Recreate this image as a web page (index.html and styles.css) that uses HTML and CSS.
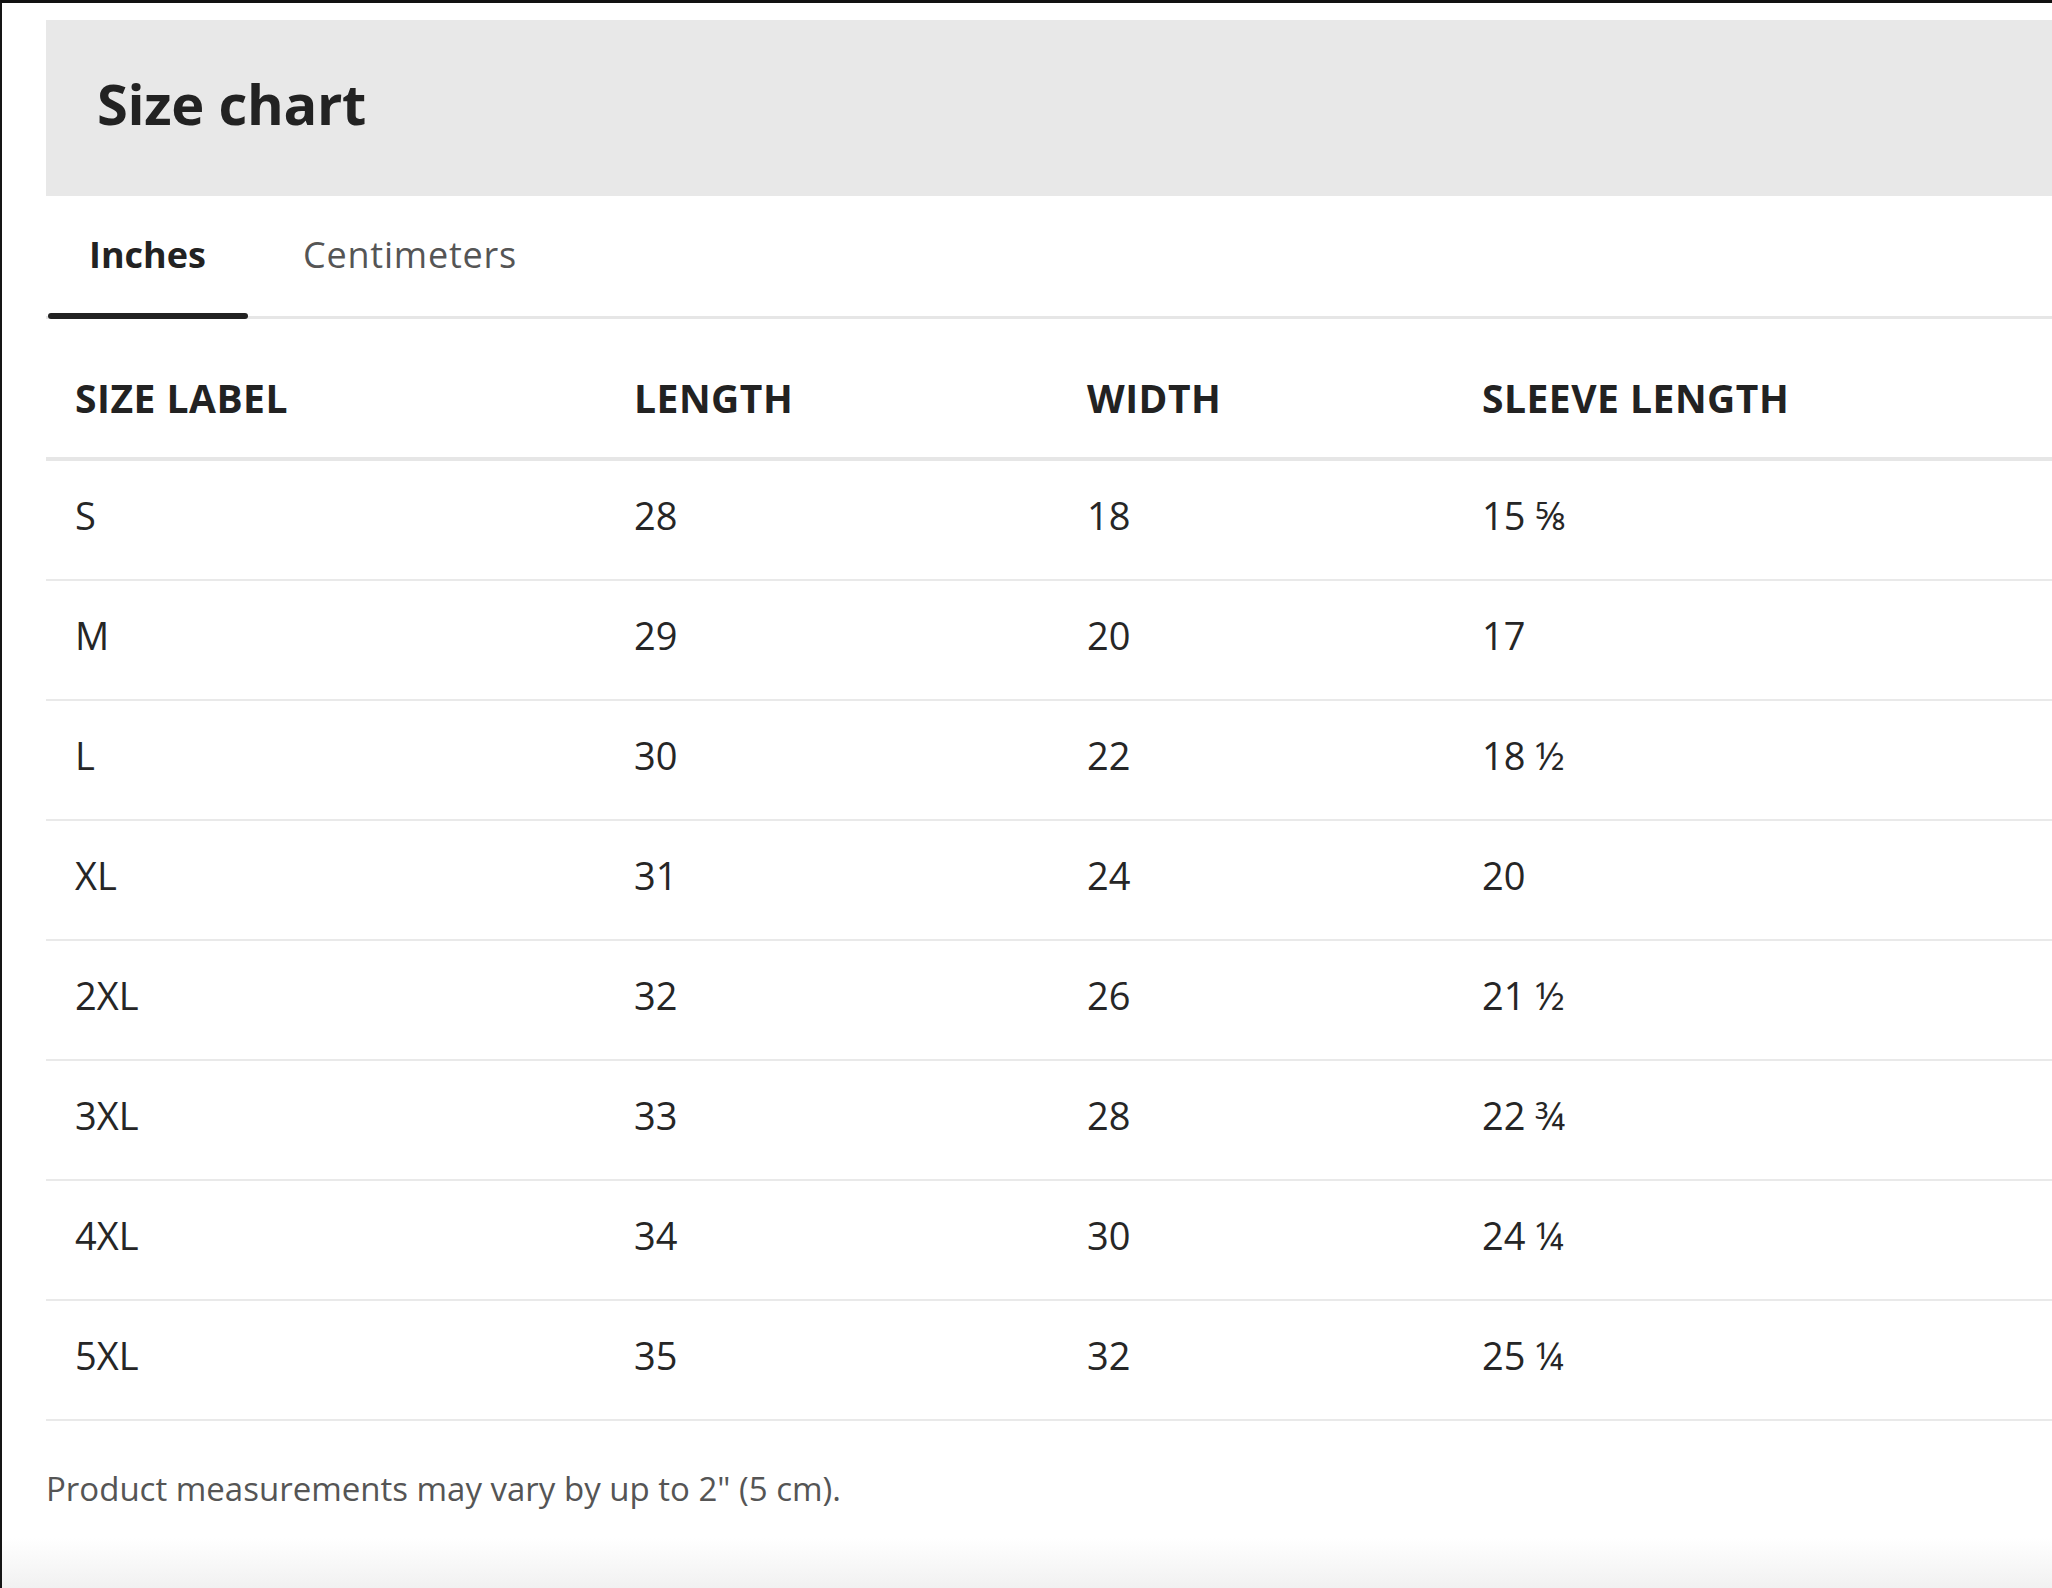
FILE: index.html
```html
<!DOCTYPE html>
<html lang="en">
<head>
<meta charset="utf-8">
<title>Size chart</title>
<link rel="stylesheet" href="styles.css">
</head>
<body>
<div class="page">
  <div class="sheet">
    <header class="title-bar">
      <h1 class="title">Size chart</h1>
    </header>
    <nav class="tabs">
      <div class="tab active"><span class="tab-label">Inches</span></div>
      <div class="tab"><span class="tab-label">Centimeters</span></div>
    </nav>
    <table class="chart">
      <colgroup>
        <col class="c1"><col class="c2"><col class="c3"><col class="c4">
      </colgroup>
      <thead>
        <tr><th>SIZE LABEL</th><th>LENGTH</th><th>WIDTH</th><th>SLEEVE LENGTH</th></tr>
      </thead>
      <tbody>
        <tr><td>S</td><td>28</td><td>18</td><td>15 ⅝</td></tr>
        <tr><td>M</td><td>29</td><td>20</td><td>17</td></tr>
        <tr><td>L</td><td>30</td><td>22</td><td>18 ½</td></tr>
        <tr><td>XL</td><td>31</td><td>24</td><td>20</td></tr>
        <tr><td>2XL</td><td>32</td><td>26</td><td>21 ½</td></tr>
        <tr><td>3XL</td><td>33</td><td>28</td><td>22 ¾</td></tr>
        <tr><td>4XL</td><td>34</td><td>30</td><td>24 ¼</td></tr>
        <tr><td>5XL</td><td>35</td><td>32</td><td>25 ¼</td></tr>
      </tbody>
    </table>
    <p class="note">Product measurements may vary by up to 2" (5 cm).</p>
  </div>
</div>
</body>
</html>
```
FILE: styles.css
```css
html, body {
  margin: 0;
  padding: 0;
}
body {
  width: 2052px;
  height: 1588px;
  overflow: hidden;
  font-family: "Open Sans", "Liberation Sans", sans-serif;
  color: #222;
  background: #fff;
}
.page {
  box-sizing: border-box;
  height: 1588px;
  border-top: 3px solid #111;
  border-left: 2px solid #151515;
  background: linear-gradient(to bottom, #fff 0, #fff 1535px, #f1f1f1 1585px);
}
.sheet {
  padding: 17px 0 0 44px;
}
.title-bar {
  box-sizing: border-box;
  height: 176px;
  background: #e8e8e8;
  padding: 55px 0 0 51px;
}
.title {
  margin: 0;
  font-size: 56px;
  line-height: 56px;
  font-weight: 700;
  letter-spacing: -0.3px;
  color: #222;
}
.tabs {
  display: flex;
  gap: 12px;
  border-bottom: 3px solid #e6e6e6;
}
.tab {
  padding-top: 34px;
  margin-bottom: -3px;
  font-size: 36px;
  line-height: 50px;
  color: #555;
}
.tab-label {
  display: block;
  padding: 0 42px 0 43px;
}
.tab::after {
  content: "";
  display: block;
  height: 6px;
  margin: 33px 0 0 2px;
  border-radius: 3px;
  background: transparent;
}
.tab + .tab .tab-label {
  letter-spacing: 0.8px;
}
.tab.active {
  font-weight: 700;
  color: #222;
}
.tab.active::after {
  background: #222;
}
.chart {
  width: 2008px;
  border-collapse: separate;
  border-spacing: 0;
  table-layout: fixed;
}
.c1 { width: 559px; }
.c2 { width: 453px; }
.c3 { width: 395px; }
.c4 { width: auto; }
.chart th {
  text-align: left;
  font-size: 39px;
  line-height: 40px;
  font-weight: 700;
  letter-spacing: 0.5px;
  color: #222;
  padding: 59px 29px 39px;
  border-bottom: 4px solid #e6e6e6;
}
.chart td {
  font-size: 38px;
  line-height: 40px;
  color: #262626;
  padding: 34px 29px 44px;
  border-bottom: 2px solid #e9e9e9;
}
.note {
  margin: 48px 0 0;
  font-size: 33px;
  line-height: 40px;
  color: #555;
}
```
